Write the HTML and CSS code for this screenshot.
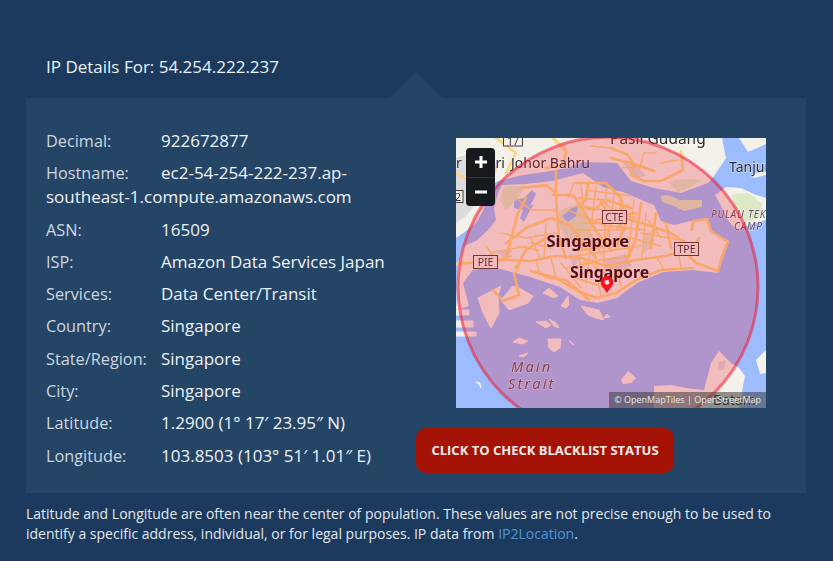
FILE: index.html
```html
<!DOCTYPE html>
<html lang="en">
<head>
<meta charset="utf-8">
<title>IP Details</title>
<link rel="stylesheet" href="styles.css">
</head>
<body>
<main class="page">
  <h1 class="title">IP Details For: 54.254.222.237</h1>
  <section class="panel">
    <span class="notch"></span>
    <div class="details">
      <p class="row"><span class="label">Decimal:</span>922672877</p>
      <p class="row"><span class="label">Hostname:</span>ec2-54-254-222-237.ap-southeast-1.compute.amazonaws.com</p>
      <p class="row"><span class="label">ASN:</span>16509</p>
      <p class="row"><span class="label">ISP:</span>Amazon Data Services Japan</p>
      <p class="row"><span class="label">Services:</span>Data Center/Transit</p>
      <p class="row"><span class="label">Country:</span>Singapore</p>
      <p class="row"><span class="label">State/Region:</span>Singapore</p>
      <p class="row"><span class="label">City:</span>Singapore</p>
      <p class="row"><span class="label">Latitude:</span>1.2900 (1° 17′ 23.95″ N)</p>
      <p class="row"><span class="label">Longitude:</span>103.8503 (103° 51′ 1.01″ E)</p>
    </div>
    <div class="side">
      <div class="map">
        <svg class="tiles" viewBox="0 0 310 270" width="310" height="270" aria-hidden="true">
          <g class="soft">
          <rect class="water" width="310" height="270"/>
          <!-- Johor -->
          <path class="land" d="M0 0H266L270 20L258 38L252 45L225 55L198 50L175 43L161 25L127 24L111 30L95 33L67 37L42 43L37 46L30 60L27 73L20 85L10 93L0 100Z"/>
          <path class="urban" d="M0 20L30 10L42 30L25 60L10 78L0 85Z"/>
          <path class="land" d="M283 0H310V6L292 14Z"/>
          <path class="land" d="M296 36L310 33V37L298 40Z"/>
          <!-- Tekong -->
          <path class="land" d="M259 57L270 49L285 50L298 56L310 60V82L290 88L280 92L272 82L264 66Z"/>
          <path class="green" d="M276 56L292 55L306 66L304 80L290 84L280 72Z"/>
          <!-- Singapore island -->
          <path class="land" d="M2 125L8 108L20 103L32 92L40 82L38 70L42 55L46 47L70 46L96 43L127 35L147 49L167 54L188 63L198 67L205 83L218 87L235 83L252 80L255 93L273 103L268 117L262 135L237 132L207 134L181 145L161 160L141 165L124 162L104 149L74 139L37 129L17 132L7 145L13 168L0 172Z"/>
          <path class="water" d="M58 62L68 60L76 52L80 56L74 68L78 66L72 76L68 84L64 80L67 72L58 70Z"/>
          <path class="green" d="M103 72L122 66L132 78L136 100L128 112L112 100L104 90Z"/>
          <path class="water" d="M106 78L116 70L122 68L120 78L112 84Z"/>
          <path class="green" d="M48 48L70 48L60 62L50 72L44 62Z"/>
          <path class="green" d="M190 95L198 92L194 110L186 116Z"/>
          <!-- Ubin and Pasir Ris sands -->
          <path class="green" d="M212 44L222 42L236 41L246 42L232 50L222 54Z"/>
          <path class="green" d="M205 58L212 57L224 62L246 62L246 69L228 73L218 68L206 64Z"/>
          <path class="urban" d="M165 22L178 24L190 38L178 40ZM112 116L125 118L118 130ZM146 122L170 116L176 128L150 134ZM40 112L56 112L50 122Z"/>
          <!-- South islands -->
          <g class="isles">
            <path d="M22 160L45 148L42 157L43 175L35 190L27 175Z"/>
            <path d="M45 162L57 148L63 150L77 158L72 165L53 172Z"/>
            <path d="M87 155L93 150L102 158L98 160Z"/>
            <path d="M105 168L112 158L113 167L110 170Z"/>
            <path d="M125 168L143 172L148 182L140 180L132 177Z"/>
            <path d="M80 184L90 183L95 187L90 190Z"/>
            <path d="M93 181L100 185L103 190L98 188Z"/>
            <path d="M57 204L63 200L72 203L67 206Z"/>
            <path d="M92 201L105 201L104 210L98 214L93 210Z"/>
            <path d="M113 202L118 207L115 205Z"/>
            <path d="M63 218L72 215L68 219Z"/>
            <path d="M148 180L151 176L154 179Z"/>
            <path d="M0 172H13V177H0ZM0 183H17V189H0ZM0 194H20V198H0Z"/>
            <path d="M20 244L24 245L25 250L23 246Z"/>
          </g>
          <!-- Batam -->
          <path class="land" d="M198 248L215 247L230 250L248 252L255 225L263 213L275 225L283 230L289 238L283 270H198Z"/>
          <path class="urban" d="M262 224L270 222L268 232L262 232Z"/>
          <path class="land" d="M165 242L172 233L180 240L175 245L167 246Z"/>
          <path class="land" d="M300 222L310 212V235L304 236Z"/>
          <!-- Roads -->
          <g class="roads">
            <path d="M0 126L25 124L50 122L75 123L100 118L125 120L150 128L180 122L210 118L235 110"/>
            <path d="M50 105L70 90L95 80L115 88L128 105L140 120"/>
            <path d="M70 60L62 75L55 100L50 122"/>
            <path d="M66 50L90 47L100 55"/>
            <path d="M100 33V60L103 100L110 120"/>
            <path d="M97 57H117L130 77L143 97L155 112"/>
            <path d="M120 45H150L165 60V90"/>
            <path d="M150 75L185 85L215 95L230 105"/>
            <path d="M165 60L170 85L160 110"/>
            <path d="M185 65L180 100L170 125"/>
            <path d="M200 75L195 110"/>
            <path d="M210 85L215 110"/>
            <path d="M236 92L237 83L251 81L255 93L272 104L266 118L262 133L240 125L233 118L243 100"/>
            <path d="M237 130L205 132L180 142L160 155L140 160L120 152L100 140L75 133"/>
            <path d="M37 152L47 163L63 157L58 135"/>
            <path d="M83 135L93 140L110 142L133 162"/>
            <path d="M155 10L172 17L178 27L175 37L188 43L205 43L227 32L225 13"/>
            <path d="M155 20L175 25L198 33"/>
            <path d="M97 0L110 13L107 27L90 30"/>
            <path d="M40 0L60 15L50 35"/>
            <path d="M0 35L25 50L40 30"/>
            <path d="M132 46L130 62L122 68L138 72L150 62L175 70"/>
            <path d="M140 82L180 75M125 112L170 104"/>
            <path d="M60 130L70 112L90 100"/>
          </g>
          <g class="roads thin">
            <path d="M120 60L150 62L175 70M112 72L150 88L190 92M125 85L160 85M112 105L175 100M120 118L185 108"/>
            <path d="M125 47L128 75M140 48L135 90M150 50L148 125M158 56L152 110M178 62L172 120M190 75L186 120M120 95L125 135M135 105L130 145"/>
            <path d="M95 120L100 140M80 122L84 137M65 122L60 135M40 124L35 130M30 108L40 122L55 118M75 100L85 122M90 85L88 120"/>
            <path d="M110 130L135 125L155 140L170 130M120 140L150 150M140 130L145 158M160 125L165 148M105 125L125 150"/>
            <path d="M200 118L208 132M222 112L225 130M60 60L75 72L100 72M45 95L70 100L100 95M145 62L160 75M175 100L205 108"/>
            <path d="M183 33L188 15L200 15M165 30L185 28M135 8L155 10M205 25L222 22"/>
            <path d="M130 52L175 58M128 68L180 80M118 92L170 92M135 96L145 116M160 70L150 100M172 66L160 92M142 60L156 82M125 125L175 118M115 138L160 130"/>
            <path d="M185 95L225 102M192 82L205 100M118 45L112 60M75 105L95 110M62 108L82 112M35 115L70 108"/>
          </g>
          <!-- Labels beneath the radius -->
          <g class="labels">
            <text class="town town-wide" x="154" y="6">Pasil Gudang</text>
            <text class="town" x="55" y="30">Johor Bahru</text>
            <text class="town" x="273" y="34">Tanjun</text>
            <text class="town" x="0" y="30">r Puteri</text>
            <text class="area" x="255" y="80">PULAU TEKO</text>
            <text class="area" x="278" y="92">CAMP</text>
            <text class="sea" x="55" y="234">Main</text>
            <text class="sea" x="52" y="251">Strait</text>
            <text class="city" x="90.500" y="109">Singapore</text>
            <text class="city city-low" x="114" y="140">Singapore</text>
            <text class="town" x="257" y="267">Batam</text>
          </g>
          <g class="shield">
            <rect x="47.500" y="-5" width="19" height="13"/><text x="57" y="6.500">17</text>
            <rect x="-8" y="52.500" width="15" height="12"/><text x="2" y="62.500">2</text>
            <rect x="146.500" y="72.500" width="24" height="13"/><text x="158.500" y="83">CTE</text>
            <rect x="218.500" y="104.500" width="24" height="13"/><text x="230.500" y="115">TPE</text>
            <rect x="17.500" y="117.500" width="24" height="13"/><text x="29.500" y="128">PIE</text>
          </g>
          <circle class="radius" cx="152" cy="149" r="150"/>
          </g>
          <path class="pin" d="M151 155C147 149 144.700 147.500 144.700 144.300A6.300 6.300 0 0 1 157.300 144.300C157.300 147.500 155 149 151 155Z"/>
          <circle class="pin-dot" cx="151" cy="144.300" r="2.400"/>
        </svg>
        <div class="zoom">
          <button class="zoom-btn" type="button" aria-label="Zoom in"><svg viewBox="0 0 12 12" width="12" height="12"><path d="M4.500 0h3v4.500H12v3H7.500V12h-3V7.500H0v-3h4.500z"/></svg></button>
          <button class="zoom-btn" type="button" aria-label="Zoom out"><svg viewBox="0 0 12 12" width="12" height="12"><path d="M0 4.500h12v3H0z"/></svg></button>
        </div>
        <div class="credit">© OpenMapTiles | OpenStreetMap</div>
      </div>
      <a class="check" href="#">Click to check blacklist status</a>
    </div>
  </section>
  <p class="note">Latitude and Longitude are often near the center of population. These values are not precise enough to be used to identify a specific address, individual, or for legal purposes. IP data from <a href="#">IP2Location</a>.</p>
</main>
</body>
</html>
```

FILE: styles.css
```css
* { box-sizing: border-box; }
html, body { margin: 0; height: 100%; }
body {
  background: #1b3a5e;
  color: #eef1f4;
  font-family: "Open Sans", sans-serif;
  font-size: 17px;
  line-height: 24px;
  overflow: hidden;
}
.page { padding: 55px 27px 0 26px; }
.title {
  margin: 0 0 19px 20px;
  font-size: 17px;
  font-weight: 400;
  line-height: 24px;
  color: #eef1f4;
}
.panel {
  position: relative;
  display: flex;
  height: 395px;
  padding: 31px 20px 0;
  background: #254567;
}
.notch {
  position: absolute;
  left: 364px;
  top: -26px;
  width: 52px;
  height: 26px;
  background: #254567;
  clip-path: polygon(50% 0, 100% 100%, 0 100%);
}
.details { width: 370px; flex: none; }
.row { margin: 0 0 8.3px; }
.label { display: inline-block; width: 115px; font-size: 16.300px; color: #ced6e0; }
.side { display: flex; flex-direction: column; align-items: flex-start; padding-top: 9px; }
.map { position: relative; width: 310px; height: 270px; margin-left: 40px; overflow: hidden; }
.tiles { display: block; }
.soft { filter: blur(.3px); }
.water { fill: #9cbcff; }
.land { fill: #f4f1ea; }
.isles { fill: #f4f1ea; stroke: #f4f1ea; stroke-width: 1; stroke-linejoin: round; }
.urban { fill: #dcdcdc; }
.green { fill: #dde8c6; }
.roads { fill: none; stroke: #ffd57c; stroke-width: 2.600; stroke-linejoin: round; stroke-linecap: round; }
.roads.thin { stroke-width: 1.500; }
.labels text { font-family: "Noto Sans", "Open Sans", sans-serif; paint-order: stroke; stroke: rgba(255,255,255,.45); stroke-width: 1.500px; }
.town { font-size: 14px; fill: #2b2b2b; }
.town-wide { font-size: 15.500px; }
.city { font-size: 16.500px; font-weight: 700; fill: #1f0a0c; }
.city-low { font-size: 15.800px; }
.area { font-size: 10px; font-style: italic; letter-spacing: .8px; fill: #5c5066; }
.sea { font-size: 14.500px; font-style: italic; letter-spacing: 2.200px; fill: #5f5360; }
.shield rect { fill: #f6efe9; stroke: #4b3a3a; stroke-width: 1; }
.shield text { font-family: "Noto Sans", "Open Sans", sans-serif; font-size: 10.500px; fill: #333; text-anchor: middle; }
.radius { fill: rgba(236, 29, 51, .25); stroke: rgba(236, 29, 51, .55); stroke-width: 3; }
.pin { fill: #f5101c; }
.pin-dot { fill: #fff; opacity: .9; }
.zoom {
  position: absolute;
  left: 10px;
  top: 10px;
  width: 29px;
  height: 58px;
  display: flex;
  flex-direction: column;
  background: #161a1d;
  border-radius: 4px;
}
.zoom-btn {
  flex: 1;
  display: flex;
  align-items: center;
  justify-content: center;
  padding: 0;
  background: none;
  border: 0;
}
.zoom-btn + .zoom-btn { border-top: 1px solid #33373a; }
.zoom-btn svg { fill: #fff; display: block; }
.credit {
  position: absolute;
  right: 0;
  bottom: 0;
  height: 16px;
  padding: 0 5px;
  background: rgba(60, 60, 60, .55);
  color: #e8e8e8;
  font-size: 9px;
  line-height: 16px;
  white-space: nowrap;
}
.check {
  display: block;
  margin-top: 20px;
  width: 258px;
  height: 45px;
  background: #a51206;
  border-radius: 10px;
  color: #f4ece9;
  font-size: 13px;
  font-weight: 700;
  line-height: 45px;
  text-align: center;
  text-decoration: none;
  text-transform: uppercase;
}
.note { margin: 11px 0 0; font-size: 14px; line-height: 20px; color: #e3e8ee; }
.note a { color: #4f94d4; text-decoration: none; }
```
